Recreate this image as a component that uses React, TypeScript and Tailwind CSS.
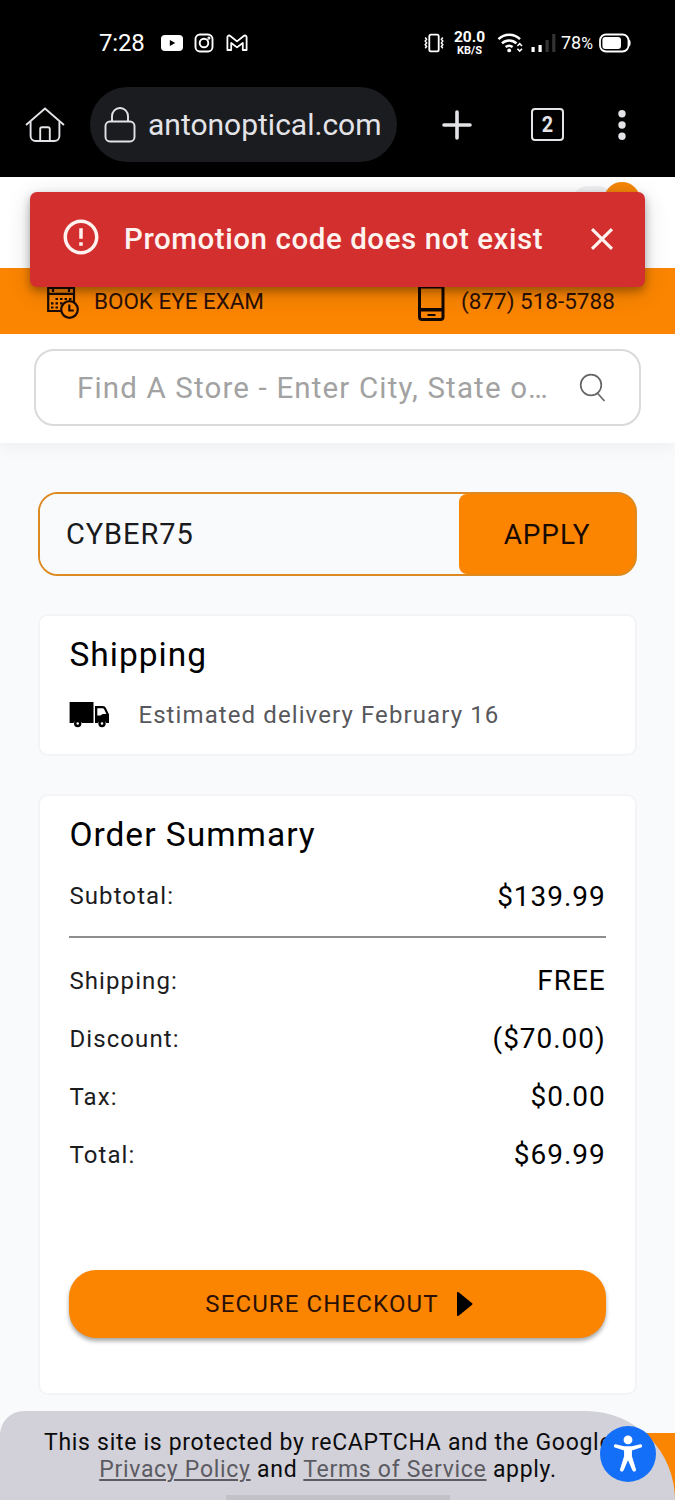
import { useState } from "react";
import { MdClose, MdErrorOutline } from "react-icons/md";

const totals = [
  { label: "Shipping:", value: "FREE" },
  { label: "Discount:", value: "($70.00)" },
  { label: "Tax:", value: "$0.00" },
  { label: "Total:", value: "$69.99" },
];

function StatusBar() {
  return (
    <div className="flex h-[86px] items-center pl-[99px] text-white">
      <span className="w-[61px] text-[24px] leading-none tracking-[-0.2px]">7:28</span>
      <svg width="24" height="18" viewBox="0 0 24 18">
        <rect x="1" y="1" width="22" height="16" rx="4" fill="#fff" />
        <path d="M9.8 6v6l5.5-3z" fill="#000" />
      </svg>
      <svg className="ml-[10px]" width="20" height="20" viewBox="0 0 20 20" fill="none" stroke="#fff" strokeWidth="1.9">
        <rect x="1.5" y="1.5" width="17" height="17" rx="4.5" />
        <circle cx="10" cy="10" r="4.3" />
        <circle cx="14.9" cy="5.1" r="0.6" />
      </svg>
      <svg className="ml-[12px]" width="22" height="18" viewBox="0 0 22 18" fill="none" stroke="#fff" strokeWidth="1.8" strokeLinejoin="round">
        <path d="M1.4 16V3.2C1.4 1.7 3.2 1 4.3 2L11 7.4 17.7 2c1.1-1 2.9-.3 2.9 1.2V16h-3.8V9L11 13.4 5.2 9V16z" />
      </svg>

      <svg className="ml-[176px]" width="20" height="20" viewBox="0 0 20 20" fill="none" stroke="#fff" strokeWidth="1.8">
        <rect x="5.3" y="1.7" width="9.4" height="16.6" rx="1.6" />
        <path d="M1.2 4.5l1.4 1.8-1.4 1.8 1.4 1.8-1.4 1.8 1.4 1.8-1.4 1.8M18.8 4.5l-1.4 1.8 1.4 1.8-1.4 1.8 1.4 1.8-1.4 1.8 1.4 1.8" strokeWidth="1.5" />
      </svg>
      <div className="ml-[9px] flex w-[33px] flex-col items-center font-bold">
        <span className="text-[15.5px] leading-[12px]">20.0</span>
        <span className="mt-[2px] text-[11px] leading-[11px]">KB/S</span>
      </div>
      <svg className="ml-[11px]" width="27" height="22" viewBox="0 0 27 22" fill="none" stroke="#fff" strokeWidth="2.5">
        <path d="M1.5 7.2a15.5 15.5 0 0 1 21.5 0M5 11.4a10.5 10.5 0 0 1 14.4 0M8.6 15.1a5.6 5.6 0 0 1 7 0" />
        <circle cx="12.2" cy="18.4" r="1.9" fill="#fff" stroke="none" />
        <path d="M20.4 14l2.3-2.3 2.3 2.3M20.4 16.8l2.3 2.3 2.3-2.3" strokeWidth="1.6" />
      </svg>
      <svg className="ml-[7px]" width="25" height="20" viewBox="0 0 25 20">
        <rect x="0.5" y="14" width="3.2" height="5" fill="#fff" />
        <rect x="7.5" y="12" width="3.2" height="7" fill="#fff" />
        <rect x="14.5" y="7" width="3.2" height="12" fill="#333" />
        <rect x="21.2" y="1" width="3.2" height="18" fill="#333" />
      </svg>
      <span className="ml-[5px] w-[34px] text-[18px] leading-none whitespace-nowrap">
        78<span className="text-[16px]">%</span>
      </span>
      <svg className="ml-[4px]" width="32" height="20" viewBox="0 0 32 20">
        <rect x="1" y="1.5" width="28.5" height="17" rx="6" fill="none" stroke="#fff" strokeWidth="1.8" />
        <rect x="3.4" y="4" width="18.6" height="12" rx="3" fill="#fff" />
        <path d="M30 6.5c2.2.8 2.2 6.2 0 7z" fill="#fff" />
      </svg>
    </div>
  );
}

function BrowserBar() {
  return (
    <div className="mt-px flex h-[75px] items-center pl-[25px] text-[#e3e3e8]">
      <svg width="40" height="36" viewBox="0 0 40 36" fill="none" stroke="currentColor" strokeWidth="1.9">
        <path d="M1 18L20 1.6 39 18" />
        <path d="M5.6 14.6V29a5 5 0 0 0 5 5h18.8a5 5 0 0 0 5-5V14.6" />
        <path d="M15.2 34V22a1.8 1.8 0 0 1 1.8-1.8h6a1.8 1.8 0 0 1 1.8 1.8v12" />
      </svg>
      <div className="ml-[25px] flex h-[75px] w-[307px] items-center rounded-full bg-[#1b1c20] pl-[14px]">
        <svg width="32" height="36" viewBox="0 0 32 36" fill="none" stroke="currentColor" strokeWidth="1.9">
          <rect x="1.5" y="14.5" width="29" height="20" rx="4.5" />
          <path d="M8 14.5V9a8 8 0 0 1 16 0v5.5" />
        </svg>
        <span className="ml-[12px] text-[30px] leading-none">antonoptical.com</span>
      </div>
      <svg className="ml-[45px]" width="30" height="30" viewBox="0 0 30 30" stroke="currentColor" strokeWidth="3.6" strokeLinecap="round">
        <path d="M15 2v26M2 15h26" />
      </svg>
      <div className="ml-[59px] flex h-[33px] w-[33px] items-center justify-center rounded-[4px] border-2 border-current text-[22px] leading-none font-bold">
        <span className="scale-x-90">2</span>
      </div>
      <svg className="ml-[54px]" width="8" height="30" viewBox="0 0 8 30" fill="currentColor">
        <circle cx="4" cy="3.7" r="3.7" />
        <circle cx="4" cy="15" r="3.7" />
        <circle cx="4" cy="26.3" r="3.7" />
      </svg>
    </div>
  );
}

function Toast({ onClose }: { onClose: () => void }) {
  return (
    <div className="absolute top-[192px] left-[30px] z-20 flex h-[95px] w-[615px] items-center rounded-[7px] bg-[#d32f2f] pl-[30px] text-[#fff3ef] shadow-[0_4px_8px_rgba(0,0,0,0.3),0_6px_24px_rgba(0,0,0,0.16)]">
      <MdErrorOutline className="-mt-[5px]" size={42} />
      <span className="ml-[22px] w-[443px] text-[29.5px] font-medium tracking-[0.56px] whitespace-nowrap">Promotion code does not exist</span>
      <button className="-mt-[2px] ml-[16px]" onClick={onClose}>
        <MdClose size={38} />
      </button>
    </div>
  );
}

function SiteHeader() {
  return (
    <header className="relative z-10 h-[266px] bg-white shadow-[0_4px_16px_rgba(0,0,0,0.05)]">
      <div className="flex h-[91px] justify-end pt-[5px] pr-[35px]">
        <div className="mt-[4px] -mr-[10px] h-[45px] w-[42px] rounded-[16px] bg-[#f1f1f4]" />
        <div className="h-[36px] w-[36px] rounded-full bg-[#f58607]" />
      </div>
      <div className="flex h-[66px] items-center bg-[#fb8500] pl-[46px] text-[22.5px] leading-none text-[#2b1008]">
        <svg width="33" height="40" viewBox="0 0 33 40" fill="none" stroke="#1c0b05" strokeWidth="2.2">
          <path d="M16 30H2.2V7h25.8v16M2 12.8h26M7 7v4M23 7v4" />
          <path d="M9.5 18h2.5M14 18h2.5M18.5 18h2.5M23 18h2.5M5 22.3h2.5M9.5 22.3h2.5M14 22.3h2.5M5 26.5h2.5M9.5 26.5h2.5" />
          <circle cx="23.5" cy="28.5" r="8.3" fill="#fb8500" />
          <path d="M23.3 23.5V29.5h4.5" />
        </svg>
        <span className="ml-[15px] w-[324px] tracking-[-0.05px]">BOOK EYE EXAM</span>
        <svg width="27" height="42" viewBox="0 0 27 42">
          <rect x="1.5" y="1.5" width="23.5" height="38" rx="2.5" fill="none" stroke="#120703" strokeWidth="3" />
          <path d="M1 2h25v6.5H1zM1 28h25v3.5H1z" fill="#120703" />
          <path d="M9.5 34h8v2h-8z" fill="#120703" />
        </svg>
        <span className="ml-[16px]">(877) 518-5788</span>
      </div>
      <div className="px-[34px] pt-[15px]">
        <div className="flex h-[77px] items-center rounded-[20px] border-2 border-[#dadada] pl-[41px]">
          <span className="w-[482px] pt-[3px] text-[29.5px] leading-none tracking-[1.15px] whitespace-nowrap text-[#a2a2a2]">
            Find A Store - Enter City, State o…
          </span>
          <svg className="ml-[20px]" width="28" height="30" viewBox="0 0 28 30" fill="none" stroke="#666" strokeWidth="1.7">
            <circle cx="12" cy="12" r="10.3" />
            <path d="M18.5 20.2L25.5 28" />
          </svg>
        </div>
      </div>
    </header>
  );
}

function TruckIcon() {
  return (
    <svg width="41" height="27" viewBox="0 0 41 27">
      <path d="M1 1h23.5v21H13a4.8 4.8 0 0 0-8.7 0H.6V1z" fill="#000" />
      <path d="M26 5h7.5c2 0 2.9.8 3.7 2.6l2.8 5.8V22h-2.6a4.8 4.8 0 0 0-8.7 0H26z" fill="#000" />
      <path d="M28.3 7.3h5c1 0 1.5.4 2 1.3l2 4.3h-3.6l-2.2 1.6h-3.2z" fill="#fff" />
      <circle cx="8.7" cy="22.5" r="2.5" fill="#fff" stroke="#000" strokeWidth="2.4" />
      <circle cx="33" cy="22.5" r="2.5" fill="#fff" stroke="#000" strokeWidth="2.4" />
    </svg>
  );
}

function OrderSummary() {
  return (
    <section className="mt-[38px] h-[601px] rounded-[10px] border-2 border-[#f4f4f6] bg-white px-[29.4px] pt-[21px] text-black">
      <h2 className="text-[33.5px] leading-[36px] tracking-[1px]">Order Summary</h2>
      <div className="mt-[14px] flex h-[58px] items-center justify-between">
        <span className="text-[24px] tracking-[1.1px] text-[#1c1c1e]">Subtotal:</span>
        <span className="pt-px text-[28px] tracking-[0.95px]">$139.99</span>
      </div>
      <hr className="mt-[11px] mb-[14px] border-t-2 border-[#8d8d8d]" />
      {totals.map((row) => (
        <div key={row.label} className="flex h-[58px] items-center justify-between">
          <span className="text-[24px] tracking-[1.1px] text-[#1c1c1e]">{row.label}</span>
          <span className="text-[28px] tracking-[0.95px]">{row.value}</span>
        </div>
      ))}
      <button className="mt-[86px] flex h-[68px] w-full items-center justify-center rounded-[27px] bg-[#fb8500] pl-[4px] text-[24px] tracking-[1.12px] text-[#2b1008] shadow-[0_3px_4px_rgba(0,0,0,0.35)]">
        SECURE CHECKOUT
        <svg className="ml-[17px]" width="18" height="26" viewBox="0 0 18 26">
          <path d="M2 2v22L15.5 13z" fill="#000" stroke="#000" strokeWidth="2" strokeLinejoin="round" />
        </svg>
      </button>
    </section>
  );
}

function RecaptchaNotice() {
  return (
    <div className="absolute bottom-0 left-0 z-10 h-[89px] w-full overflow-hidden rounded-tl-[24px] rounded-tr-[89px] bg-[#d2d1d9] pt-[18px] text-center text-[23px] leading-[27px] tracking-[0.7px] text-[#0b0b0d]">
      <p className="pl-[44px] text-left whitespace-nowrap">This site is protected by reCAPTCHA and the Google</p>
      <p className="pr-[19px]">
        <a className="text-[#5c5b62] underline decoration-2 underline-offset-2">Privacy Policy</a> and{" "}
        <a className="text-[#5c5b62] underline decoration-2 underline-offset-2">Terms of Service</a> apply.
      </p>
      <div className="mx-auto mt-[12px] h-[10px] w-[224px] bg-[#c2c1c7]" />
    </div>
  );
}

export default function App() {
  const [showToast, setShowToast] = useState(true);
  const [code, setCode] = useState("CYBER75");

  return (
    <div className="relative h-[1500px] w-[675px] overflow-hidden bg-[#f9fafc] font-['Roboto',sans-serif]">
      <div className="h-[177px] bg-black">
        <StatusBar />
        <BrowserBar />
      </div>
      {showToast && <Toast onClose={() => setShowToast(false)} />}
      <SiteHeader />

      <main className="h-[990px] px-[38px] pt-[49px]">
        <div className="flex h-[84px] overflow-hidden rounded-[20px] border-2 border-[#dd8a20] bg-linear-to-r from-transparent from-80% to-[#fb8500] to-80%">
          <input
            className="w-[419px] bg-[#f9fafc] pt-[2px] pl-[26px] text-[29px] tracking-[0.9px] text-[#1a1a1c] outline-none"
            value={code}
            onChange={(e) => setCode(e.target.value)}
          />
          <button className="flex-1 rounded-l-[8px] bg-[#fb8500] pt-[2px] text-[28px] tracking-[0.9px] text-[#1a0a04]">APPLY</button>
        </div>

        <section className="mt-[38px] h-[142px] rounded-[10px] border-2 border-[#f4f4f6] bg-white px-[29.4px] pt-[21px]">
          <h2 className="text-[33.5px] leading-[36px] tracking-[1px] text-black">Shipping</h2>
          <div className="mt-[23px] flex h-[37px] items-center">
            <TruckIcon />
            <span className="ml-[28px] text-[24px] tracking-[1.1px] text-[#58585c]">Estimated delivery February 16</span>
          </div>
        </section>

        <OrderSummary />
      </main>

      {/* site footer peeking out behind the notice */}
      <div className="h-[67px] bg-[#fb8500]" />
      <RecaptchaNotice />

      <button className="absolute top-[1426px] left-[600px] z-20 h-[56px] w-[56px] rounded-full bg-[#146ff8]">
        <svg width="56" height="56" viewBox="0 0 57 57" fill="#fff">
          <circle cx="28.5" cy="14.2" r="4.5" />
          <path d="M16 18.6c-1.8-.5-2.8 2.6-.8 3.3l9.3 3v6l-4.1 13c-.6 2.6 2.8 3.4 3.7 1.2l4.4-10.3 4.4 10.3c1 2.2 4.3 1.4 3.7-1.2l-4.1-13v-6l9.3-3c2-.7 1-3.8-.8-3.3l-8.5 2h-8z" />
        </svg>
      </button>
    </div>
  );
}
